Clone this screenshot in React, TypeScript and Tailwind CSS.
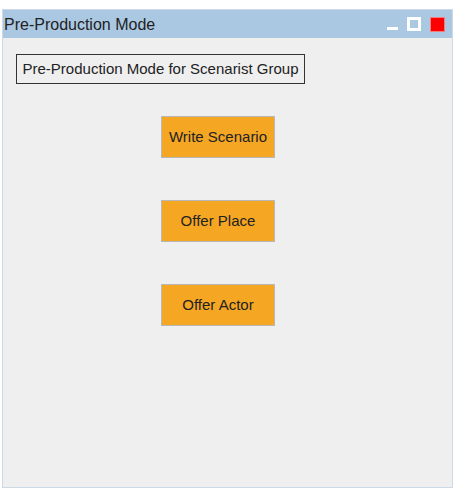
import React from 'react';

export default function App() {
  const buttons = ['Write Scenario', 'Offer Place', 'Offer Actor'];

  return (
    <div className="w-[462px] h-[497px] bg-white pt-[9px] pl-[2px]" style={{ fontFamily: 'Arial, "Liberation Sans", sans-serif' }}>
      <div className="w-[451px] h-[479px] flex flex-col border border-[#ccd9e6] bg-[#efefef]">
        {/* title bar */}
        <div className="h-[28px] bg-[#abc8e2] flex items-center justify-between pl-[1px] pr-[7px]">
          <span className="text-[16px] text-[#222] leading-none pt-[2px]">Pre-Production Mode</span>
          <div className="flex items-center gap-[9px]">
            <div className="w-[11px] h-[14px] flex items-end pb-[1px]">
              <div className="w-[11px] h-[3px] bg-white" />
            </div>
            <div className="w-[14px] h-[14px] border-[3px] border-white bg-[#abc8e2]" />
            <div className="w-[15px] h-[15px] bg-[#ff0000] border border-[#f08080]" />
          </div>
        </div>

        {/* body */}
        <div className="flex-1 flex flex-col">
          <div className="mt-[16px] ml-[13px] self-start h-[30px] w-[289px] border border-[#333] flex items-center justify-center text-[15px] text-[#222]">
            Pre-Production Mode for Scenarist Group
          </div>

          <div className="flex flex-col items-center mt-[32px] gap-[42px] pr-[19px]">
            {buttons.map((b) => (
              <button
                key={b}
                className="w-[114px] h-[42px] bg-[#f5a623] border border-[#b8b8b8] text-[15px] text-[#222] flex items-center justify-center"
              >
                {b}
              </button>
            ))}
          </div>
        </div>
      </div>
    </div>
  );
}
